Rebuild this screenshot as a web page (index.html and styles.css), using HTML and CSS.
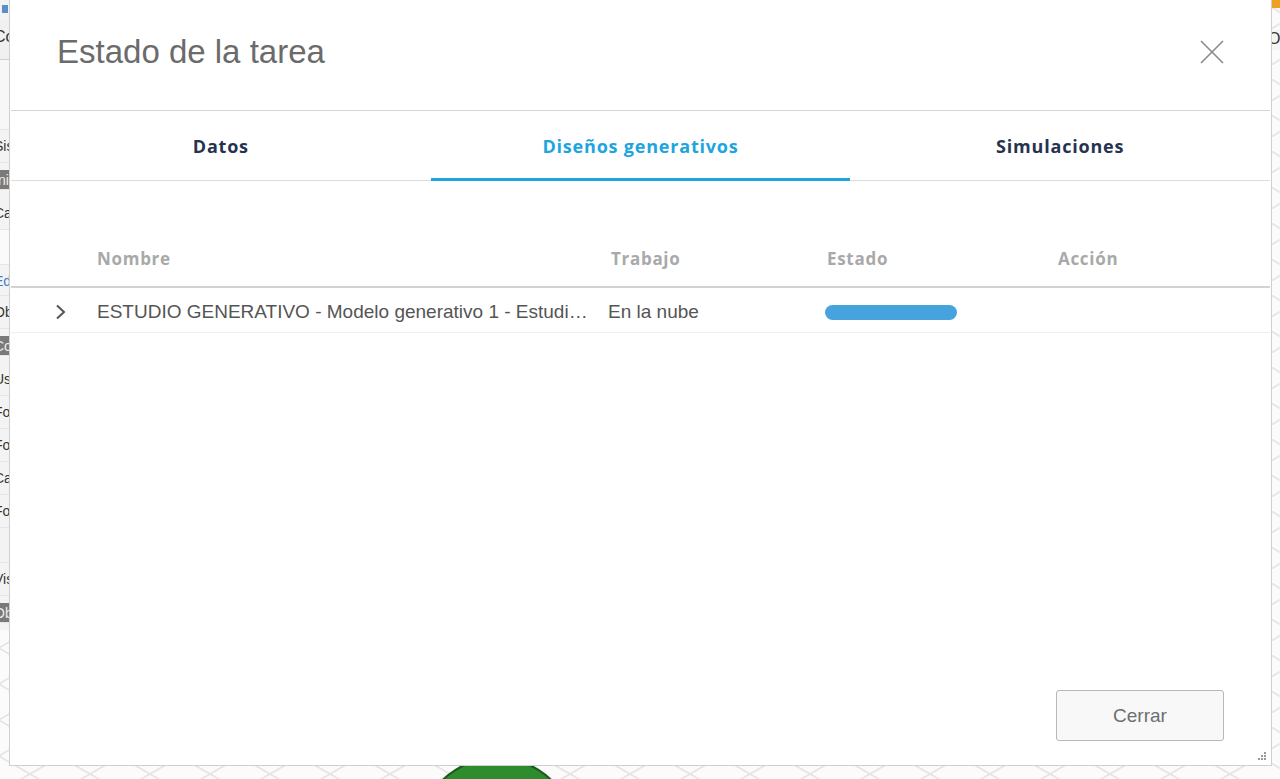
FILE: index.html
```html
<!DOCTYPE html>
<html lang="es">
<head>
<meta charset="utf-8">
<title>Estado de la tarea</title>
<link rel="stylesheet" href="styles.css">
</head>
<body>
<div class="app">
  <aside class="sidebar">
    <div class="sb-top"><span class="sb-icon"></span></div>
    <div class="sb-row sb-head">Col</div>
    <div class="sb-row sb-blank"></div>
    <div class="sb-row">Sistema</div>
    <div class="sb-row sb-dark">Inicio</div>
    <div class="sb-row">Cambiar</div>
    <div class="sb-row sb-tall"></div>
    <div class="sb-row sb-blue">Edit</div>
    <div class="sb-row">Objetos</div>
    <div class="sb-row sb-dark">Componentes</div>
    <div class="sb-row">Usuarios</div>
    <div class="sb-row">Formas</div>
    <div class="sb-row">Formas</div>
    <div class="sb-row">Cama</div>
    <div class="sb-row">Forma</div>
    <div class="sb-row sb-empty"></div>
    <div class="sb-row">Vista</div>
    <div class="sb-row sb-dark">Obstac</div>
  </aside>
  <main class="canvas">
    <div class="canvas-bar"><span class="badge"></span><span class="canvas-label">O</span></div>
    <div class="shape-circle"></div>
  </main>
</div>

<div class="dialog">
  <header class="dlg-head">
    <h1 class="dlg-title">Estado de la tarea</h1>
    <button class="dlg-close" aria-label="Cerrar">
      <svg width="24" height="24" viewBox="0 0 24 24"><path d="M1 1 L23 23 M23 1 L1 23" stroke="#8a8a8a" stroke-width="1.6" fill="none"/></svg>
    </button>
  </header>
  <nav class="tabs">
    <div class="tab">Datos</div>
    <div class="tab active">Diseños generativos</div>
    <div class="tab">Simulaciones</div>
  </nav>
  <section class="table">
    <div class="thead">
      <div class="c-exp"></div>
      <div class="c-name">Nombre</div>
      <div class="c-job">Trabajo</div>
      <div class="c-state">Estado</div>
      <div class="c-act">Acción</div>
    </div>
    <div class="trow">
      <div class="c-exp">
        <svg width="12" height="16" viewBox="0 0 12 16"><path d="M2 1.5 L9 8 L2 14.5" stroke="#555" stroke-width="2" fill="none"/></svg>
      </div>
      <div class="c-name ellipsis">ESTUDIO GENERATIVO - Modelo generativo 1 - Estudio generativo 1</div>
      <div class="c-job">En la nube</div>
      <div class="c-state"><div class="progress"></div></div>
      <div class="c-act"></div>
    </div>
  </section>
  <footer class="dlg-foot">
    <button class="btn">Cerrar</button>
  </footer>
  <div class="grip">
    <svg width="10" height="10" viewBox="0 0 10 10" fill="#9a9a9a"><rect x="7" y="1" width="2" height="2"/><rect x="4" y="4" width="2" height="2"/><rect x="7" y="4" width="2" height="2"/><rect x="1" y="7" width="2" height="2"/><rect x="4" y="7" width="2" height="2"/><rect x="7" y="7" width="2" height="2"/></svg>
  </div>
</div>
</body>
</html>
```
FILE: styles.css
```css
* { box-sizing: border-box; }
html, body { margin: 0; padding: 0; }
body {
  width: 1280px;
  height: 779px;
  overflow: hidden;
  position: relative;
  font-family: "Liberation Sans", Arial, sans-serif;
  background-color: #fbfbfb;
  background-image:
    linear-gradient(30deg, transparent 48%, #e6e6e6 49%, #e6e6e6 51%, transparent 52%),
    linear-gradient(150deg, transparent 48%, #e6e6e6 49%, #e6e6e6 51%, transparent 52%);
  background-size: 60px 36px;
}
.app {
  display: flex;
  align-items: flex-start;
  height: 779px;
  overflow: hidden;
}
.sidebar {
  width: 200px;
  background: #f3f3f3;
  border-right: 1px solid #ddd;
  display: flex;
  flex-direction: column;
  font-size: 14px;
  color: #333;
}
.sb-top { height: 20px; padding-left: 2px; }
.sb-icon { display: inline-block; width: 6px; height: 8px; background: #5a8fc8; }
.sb-row {
  height: 33px;
  line-height: 32px;
  text-indent: -6px;
  border-bottom: 1px solid #e6e6e6;
  background: #f3f3f3;
  white-space: nowrap;
  overflow: hidden;
}
.sb-head { height: 40px; line-height: 34px; font-size: 16px; background: #f0f0f0; border-bottom: 1px solid #d0d0d0; }
.sb-blank { height: 70px; background: #f7f7f7; }
.sb-dark { background: #7a7a7a; color: #eee; height: 20px; line-height: 20px; margin: 7px 0; }
.sb-tall { height: 35px; background: #fafafa; }
.sb-blue { color: #3a7fc4; height: 31px; }
.sb-empty { height: 35px; }
.canvas {
  flex: 1;
  align-self: stretch;
  position: relative;
  overflow: hidden;
}
.canvas-bar { display: flex; flex-direction: column; align-items: flex-end; }
.badge { width: 12px; height: 8px; background: #f0a020; }
.canvas-label { font-size: 16px; color: #333; margin-top: 22px; width: 12px; height: 20px; background: #f4f4f4; }
.shape-circle {
  position: absolute;
  left: 218px;
  top: 757px;
  width: 158px;
  height: 158px;
  border-radius: 50%;
  background: #2e8b2e;
  border: 2px solid #1c5a1c;
}

/* dialog */
.dialog {
  position: absolute;
  left: 9px;
  top: -1px;
  width: 1263px;
  height: 767px;
  background: #fff;
  border: 1px solid #cfcfcf;
  display: flex;
  flex-direction: column;
  padding: 0 1px;
}
.dlg-head {
  height: 111px;
  flex: none;
  border-bottom: 1px solid #d4d4d4;
  display: flex;
  align-items: center;
  justify-content: space-between;
  padding: 0 46px 6px 46px;
}
.dlg-title {
  margin: 0;
  font-weight: normal;
  font-size: 33px;
  color: #6b6b6b;
  font-family: "Liberation Sans", Arial, sans-serif;
}
.dlg-close {
  border: 0;
  background: none;
  padding: 0;
  width: 24px;
  height: 24px;
  cursor: pointer;
}
.tabs {
  display: grid;
  grid-template-columns: 1fr 1fr 1fr;
  height: 70px;
  flex: none;
  border-bottom: 1px solid #dcdcdc;
}
.tab {
  display: flex;
  align-items: center;
  justify-content: center;
  font-family: "Open Sans", sans-serif;
  font-weight: 700;
  font-size: 18px;
  letter-spacing: 0.8px;
  color: #26334f;
  padding-top: 2px;
  border-bottom: 3px solid transparent;
  margin-bottom: -1px;
}
.tab.active {
  color: #1da5dd;
  border-bottom-color: #1da5dd;
}
.table { margin-top: 56px; }
.thead, .trow {
  display: grid;
  grid-template-columns: 86px 511px 217px 231px 1fr;
}
.thead {
  height: 51px;
  align-items: center;
  border-bottom: 2px solid #d2d2d2;
  font-family: "Open Sans", sans-serif;
  font-weight: 700;
  font-size: 17px;
  letter-spacing: 0.7px;
  color: #a9a9a9;
  padding-bottom: 7px;
}
.thead .c-job { padding-left: 3px; }
.thead .c-state, .thead .c-act { padding-left: 2px; }
.trow {
  height: 45px;
  align-items: center;
  border-bottom: 1px solid #efefef;
  font-size: 19px;
  color: #555;
  padding-top: 4px;
}
.trow .c-exp { padding-left: 44px; display: flex; align-items: center; }
.ellipsis { white-space: nowrap; overflow: hidden; text-overflow: ellipsis; padding-right: 14px; }
.progress {
  width: 132px;
  height: 15px;
  border-radius: 8px;
  background: #47a3de;
}
.dlg-foot {
  margin-top: auto;
  display: flex;
  justify-content: flex-end;
  padding: 0 46px 24px 0;
}
.btn {
  width: 168px;
  height: 51px;
  border: 1px solid #b9b9b9;
  border-radius: 3px;
  background: #f8f8f8;
  font-family: "Liberation Sans", Arial, sans-serif;
  font-size: 19px;
  color: #6e6e6e;
}
.grip {
  position: absolute;
  right: 4px;
  bottom: 4px;
  width: 10px;
  height: 10px;
  display: flex;
}
```
